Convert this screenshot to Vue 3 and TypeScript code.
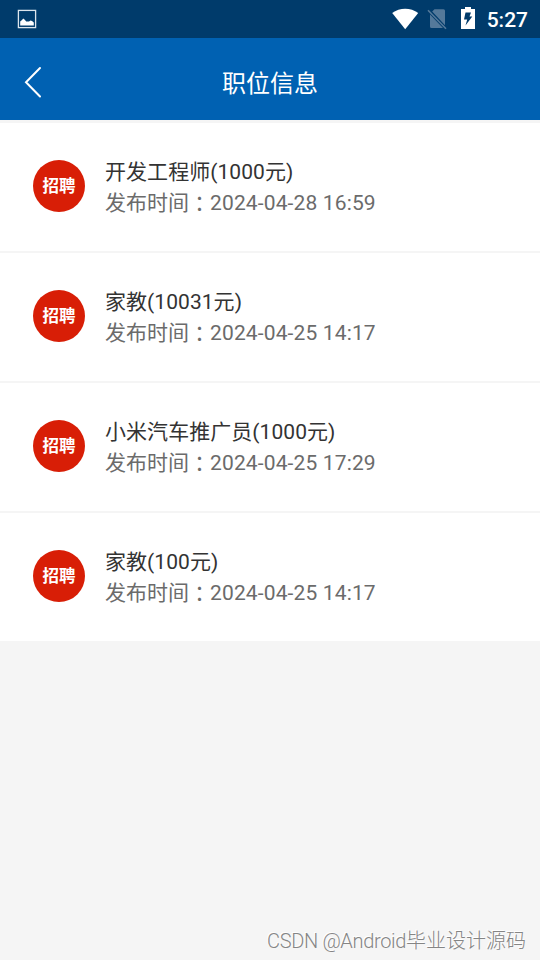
<script setup lang="ts">
interface Job {
  title: string
  time: string
}

const jobs: Job[] = [
  { title: '开发工程师(1000元)', time: '2024-04-28 16:59' },
  { title: '家教(10031元)', time: '2024-04-25 14:17' },
  { title: '小米汽车推广员(1000元)', time: '2024-04-25 17:29' },
  { title: '家教(100元)', time: '2024-04-25 14:17' },
]
</script>

<template>
  <div class="screen">
    <div class="status">
      <svg class="picture" width="20" height="20" viewBox="0 0 20 20">
        <rect x="1.4" y="1.4" width="17.2" height="17.2" fill="none" stroke="#dce5ed" stroke-width="1.3" />
        <path d="M3.200 16.500V12.500L5 11L6.200 9.500L7.800 10.700L9.200 12.600L12 12.500L13.500 11.500L15 12L16.800 13.500V16.500z" fill="#fff" />
      </svg>
      <div class="indicators">
        <svg class="wifi" width="28" height="22" viewBox="0 0 28 22">
          <path d="M1.200 5C8.700-.8 19.700-.8 27.200 5L14.200 21.200z" fill="#fff" />
        </svg>
        <svg class="sim" width="20" height="22" viewBox="0 0 20 22">
          <path d="M7.500 1.200h9q1.500 0 1.500 1.500V17.200L5.200 3.500zM3 6.500L16 20H4.500Q3 20 3 18.500z" fill="#54799a" />
          <path d="M1 2.300l18 18.500" stroke="#54799a" stroke-width="1.600" />
        </svg>
        <svg class="battery" width="14" height="22" viewBox="0 0 14 22">
          <path d="M4 0h6v2h4v20H0V2h4z" fill="#fff" />
          <path d="M4.500 5.500h5.500L8.500 9.500H11.300L4.500 18.500L6.200 12.500H3z" fill="#003b6b" />
        </svg>
        <span class="clock">5:27</span>
      </div>
    </div>
    <header class="bar">
      <svg class="back" width="18" height="32" viewBox="0 0 18 32">
        <path d="M16 2L2 16.300L16 30.500" fill="none" stroke="#fff" stroke-width="2" stroke-linecap="round" />
      </svg>
      <h1>职位信息</h1>
    </header>
    <main class="list">
      <article v-for="(job, index) in jobs" :key="index" class="job">
        <div class="badge">招聘</div>
        <div class="info">
          <div class="title">{{ job.title }}</div>
          <div class="time">发布时间<span class="colon" lang="zh-TW">：</span><span class="date">{{ job.time }}</span></div>
        </div>
      </article>
    </main>
    <footer class="watermark"><span class="latin">CSDN @Android</span>毕业设计源码</footer>
  </div>
</template>

<style>
body {
  margin: 0;
}
</style>

<style scoped>
.screen {
  width: 540px;
  height: 960px;
  display: flex;
  flex-direction: column;
  background: #f5f5f5;
  font-family: Roboto, "Noto Sans CJK SC", sans-serif;
  overflow: hidden;
}
.status {
  height: 38px;
  flex: none;
  display: flex;
  justify-content: space-between;
  align-items: center;
  box-sizing: border-box;
  padding: 0 12px 0 17px;
  background: #003b6b;
}
.indicators {
  display: flex;
  align-items: center;
}
.wifi {
  margin: 0 8px 1px 0;
}
.sim {
  margin-right: 14px;
}
.battery {
  margin: 0 12px 2px 0;
}
.clock {
  color: #fff;
  font-size: 21px;
  font-weight: 500;
  line-height: 38px;
  padding-top: 1px;
}
.bar {
  height: 82px;
  flex: none;
  display: grid;
  grid-template-columns: 60px 1fr 60px;
  align-items: center;
  background: #0061b2;
}
.back {
  margin: 6px 0 0 24px;
}
h1 {
  margin: 10px 0 0;
  color: #fff;
  font-size: 24px;
  font-weight: 400;
  line-height: 36px;
  text-align: center;
}
.list {
  display: flex;
  flex-direction: column;
  gap: 2px;
  margin-top: 3px;
}
.job {
  height: 128px;
  box-sizing: border-box;
  display: flex;
  align-items: flex-start;
  gap: 20px;
  padding: 34px 33px 0;
  background: #fff;
}
.badge {
  width: 52px;
  height: 52px;
  margin-top: 3px;
  flex: none;
  border-radius: 50%;
  background: #d81e06;
  color: #fff;
  font-size: 16.5px;
  font-weight: 700;
  line-height: 53px;
  text-align: center;
}
.info {
  font-size: 21px;
  line-height: 31px;
  white-space: nowrap;
}
.title {
  color: #333;
  letter-spacing: 0.05px;
}
.time {
  color: #6b6b6b;
}
.date {
  letter-spacing: 0.14px;
}
.colon {
  position: relative;
  top: 1px;
  font-family: "Noto Sans CJK TC", sans-serif;
  line-height: 1;
}
.watermark {
  margin: auto 14px 4px 0;
  color: #858585;
  font-family: "Noto Sans CJK SC", sans-serif;
  font-size: 20px;
  font-weight: 300;
  line-height: 30px;
  text-align: right;
  text-shadow: -1px -1px 0 #fff;
}
.latin {
  font-family: Roboto, sans-serif;
  letter-spacing: -0.33px;
}
</style>
